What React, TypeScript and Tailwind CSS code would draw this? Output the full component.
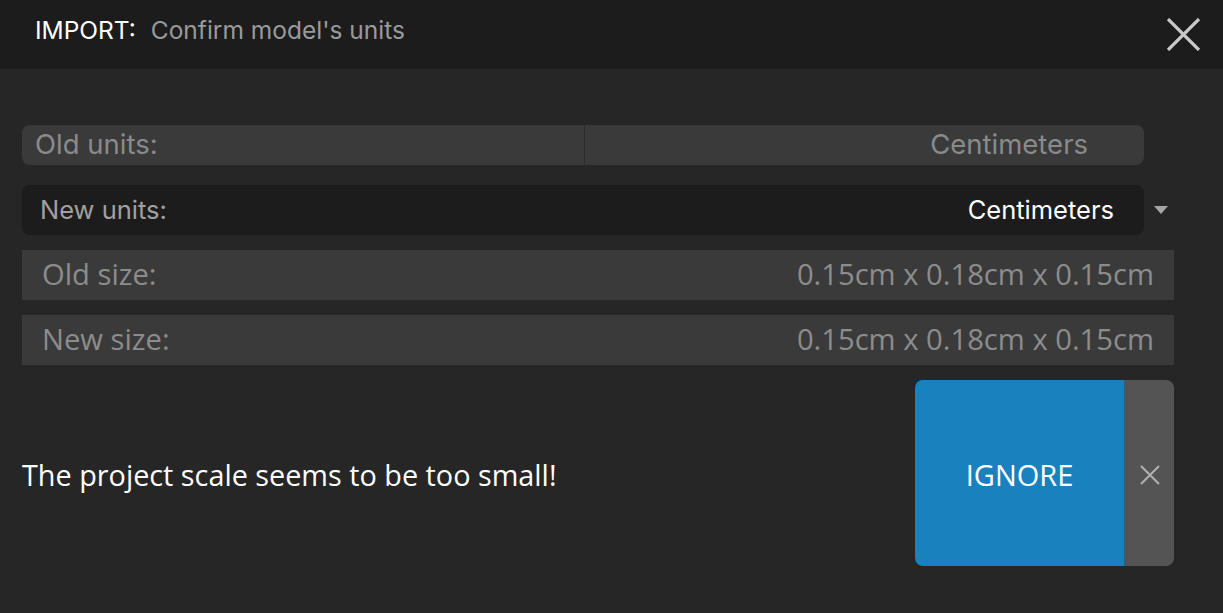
import React from "react";

const inter = { fontFamily: "Inter, 'Liberation Sans', sans-serif" };

const SizeRow = ({ label, value }: { label: string; value: string }) => (
  <div className="flex h-[50px] items-center justify-between bg-[#3a3a3a] pl-[20px] pr-[20px] font-['Open_Sans',sans-serif] text-[29.2px] text-[#8c8c8c]">
    <span>{label}</span>
    <span>{value}</span>
  </div>
);

export default function App() {
  return (
    <div className="flex h-[613px] w-[1223px] flex-col bg-[#262626]">
      {/* header */}
      <div className="flex h-[69px] shrink-0 items-center justify-between bg-[#1c1c1c] pb-[8px] pl-[35px] pr-[20px]">
        <div className="flex items-center text-[24.5px]" style={inter}>
          <span className="text-white">IMPORT:</span>
          <span className="ml-[15px] text-[#9a9a9a]">Confirm model's units</span>
        </div>
        <button className="mt-[8px] flex h-[40px] w-[40px] items-center justify-center">
          <svg width="35" height="33" viewBox="0 0 35 33">
            <path d="M2 1 L33 32 M33 1 L2 32" stroke="#c8c8c8" strokeWidth="3.2" />
          </svg>
        </button>
      </div>

      {/* body */}
      <div className="flex flex-1 flex-col pl-[22px] pr-[49px] pt-[56px]">
        <div className="mr-[30px] flex h-[40px] items-stretch rounded-[8px] bg-[#3a3a3a] text-[27.5px] text-[#8a8a8a]" style={inter}>
          <div className="flex w-[562px] items-center pl-[13px]">Old units:</div>
          <div className="w-px bg-[#2c2c2c]" />
          <div className="flex flex-1 items-center justify-end pr-[56px]">Centimeters</div>
        </div>

        <div className="mt-[20px] flex h-[50px] items-center">
          <div className="flex h-[50px] flex-1 items-center justify-between rounded-[8px] bg-[#1c1c1c] pl-[18px] pr-[30px] text-[25.5px]" style={inter}>
            <span className="text-[#a0a0a0]">New units:</span>
            <span className="text-white">Centimeters</span>
          </div>
          <div className="flex w-[30px] justify-end">
            <svg width="16" height="10" viewBox="0 0 16 10" className="mr-[5px]">
              <path d="M1 1 L15 1 L8 9 Z" fill="#a6a6a6" />
            </svg>
          </div>
        </div>

        <div className="mt-[15px] flex flex-col gap-[15px]">
          <SizeRow label="Old size:" value="0.15cm x 0.18cm x 0.15cm" />
          <SizeRow label="New size:" value="0.15cm x 0.18cm x 0.15cm" />
        </div>

        <div className="mt-[15px] flex items-center justify-between">
          <p className="pt-[4px] font-['Open_Sans',sans-serif] text-[28.8px] text-white">
            The project scale seems to be too small!
          </p>
          <div className="flex h-[186px] w-[259px] overflow-hidden rounded-[8px]">
            <button className="flex w-[209px] items-center justify-center bg-[#1982be] pt-[4px] font-['Open_Sans',sans-serif] text-[29px] text-white">
              IGNORE
            </button>
            <div className="w-px bg-[#2a5f80]" />
            <button className="flex flex-1 items-center justify-center bg-[#545454] pt-[3px]">
              <svg width="22" height="22" viewBox="0 0 22 22">
                <path d="M2 2 L20 20 M20 2 L2 20" stroke="#b0b0b0" strokeWidth="2" />
              </svg>
            </button>
          </div>
        </div>
      </div>
    </div>
  );
}
